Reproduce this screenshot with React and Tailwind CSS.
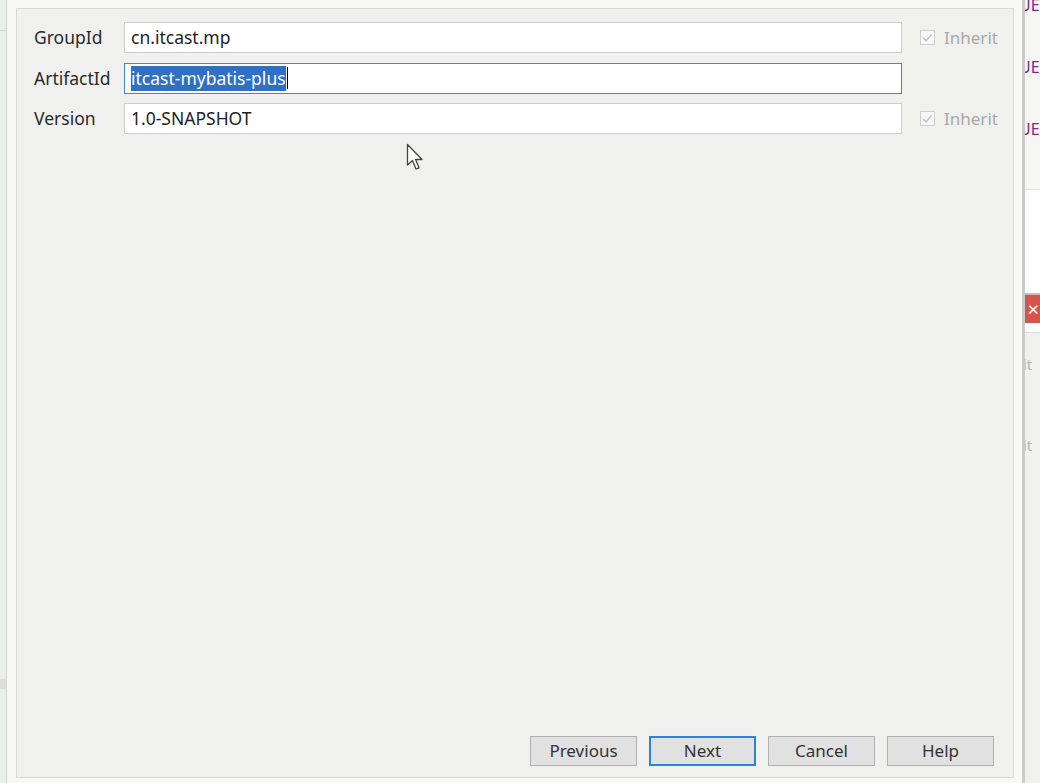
import React from "react";

const font = { fontFamily: '"Noto Sans", "Open Sans", Arial, sans-serif' };

function Inherit() {
  return (
    <div className="flex items-center gap-[9px] text-[17px] text-[#a8a8a8]">
      <span className="flex h-[15px] w-[15px] items-center justify-center border border-[#cfcfcf] bg-[#f7f7f7]">
        <svg viewBox="0 0 12 12" className="h-[11px] w-[11px]" fill="none" stroke="#bdbdbd" strokeWidth="1.4">
          <path d="M1.5 6.5 L4.5 9.5 L10.5 2.5" />
        </svg>
      </span>
      <span>Inherit</span>
    </div>
  );
}

function Row({ label, children, inherit }) {
  return (
    <div className="flex h-[31px] items-center">
      <div className="w-[90px] text-[17.5px] text-[#2a2a2a]">{label}</div>
      {children}
      <div className="ml-[18px] w-[92px]">{inherit && <Inherit />}</div>
    </div>
  );
}

function Button({ children, primary }) {
  return (
    <button
      className={
        "h-[30px] w-[107px] bg-[#e1e1e1] text-[17px] text-[#333] " +
        (primary ? "border-2 border-[#2b84d6]" : "border border-[#b0b0b0]")
      }
    >
      {children}
    </button>
  );
}

export default function App() {
  return (
    <div className="relative flex h-[783px] w-[1040px] overflow-hidden bg-[#f8f9f7]" style={font}>
      {/* left edge of the IDE behind */}
      <div className="flex w-[7px] flex-col border-r border-[#d2d4d2] bg-[#eceeec]">
        <div className="mt-[30px] h-px bg-[#d6d6d6]" />
        <div className="mt-[648px] h-[10px] bg-[#dedfdd]" />
      </div>

      {/* dialog */}
      <div className="flex flex-1 flex-col border-r-[3px] border-[#cacbca] bg-[#f8f9f7] pl-[9px] pr-[8px] pt-[8px] pb-[5px]">
        <div className="flex flex-1 flex-col justify-between border border-[#d8d9d7] bg-[#f0f1ef]">
          <div className="flex flex-col gap-[9.5px] pl-[17px] pt-[13px]">
            <Row label="GroupId" inherit>
              <div className="flex h-[31px] w-[778px] items-center border border-[#cdcdcd] bg-white px-[6px] text-[17.5px] text-[#1e1e1e]">
                cn.itcast.mp
              </div>
            </Row>
            <Row label="ArtifactId">
              <div className="flex h-[31px] w-[778px] items-center border border-[#3d86d0] bg-white px-[6px] text-[17.5px]">
                <span className="bg-[#2f6fc4] leading-[25px] text-white">itcast-mybatis-plus</span>
                <span className="ml-px h-[22px] w-px bg-black" />
              </div>
            </Row>
            <Row label="Version" inherit>
              <div className="flex h-[31px] w-[778px] items-center border border-[#cdcdcd] bg-white px-[6px] text-[17.5px] text-[#1e1e1e]">
                1.0-SNAPSHOT
              </div>
            </Row>
          </div>

          <div className="flex justify-end gap-3 pr-[19px] pb-[11px]">
            <Button>Previous</Button>
            <Button primary>Next</Button>
            <Button>Cancel</Button>
            <Button>Help</Button>
          </div>
        </div>
      </div>

      {/* right edge of the IDE behind */}
      <div className="flex w-[15px] flex-col overflow-hidden bg-[#fbfbfb] text-[16px] text-[#7b2a86]">
        <div className="h-[190px] border-b border-[#e4e4e4] bg-[#f6f7f5] leading-none">
          <div className="-ml-[6px] -mt-[3px] whitespace-nowrap">UE</div>
          <div className="-ml-[6px] mt-[46px] whitespace-nowrap">UE</div>
          <div className="-ml-[6px] mt-[46px] whitespace-nowrap">UE</div>
        </div>
        <div className="h-[105px] border-b-2 border-[#bfbfbf] bg-white" />
        <div className="flex h-[28px] items-center bg-[#d9534a] pl-[2px] text-[15px] text-white">✕</div>
        <div className="h-[10px] border-b border-[#dcdcdc] bg-white" />
        <div className="flex-1 bg-[#f0f1ef] text-[15px] text-[#b4b4b4]">
          <div className="mt-[20px] -ml-[2px]">it</div>
          <div className="mt-[58px] -ml-[2px]">it</div>
        </div>
      </div>

      {/* mouse pointer */}
      <svg className="absolute left-[406px] top-[143px]" width="20" height="30" viewBox="0 0 20 30">
        <path d="M1.5 1.5 L1.5 22 L6.5 17.5 L10 26 L13 24.8 L9.6 16.5 L16 16.5 Z" fill="#fff" stroke="#444" strokeWidth="1.3" strokeLinejoin="round" />
      </svg>
    </div>
  );
}
